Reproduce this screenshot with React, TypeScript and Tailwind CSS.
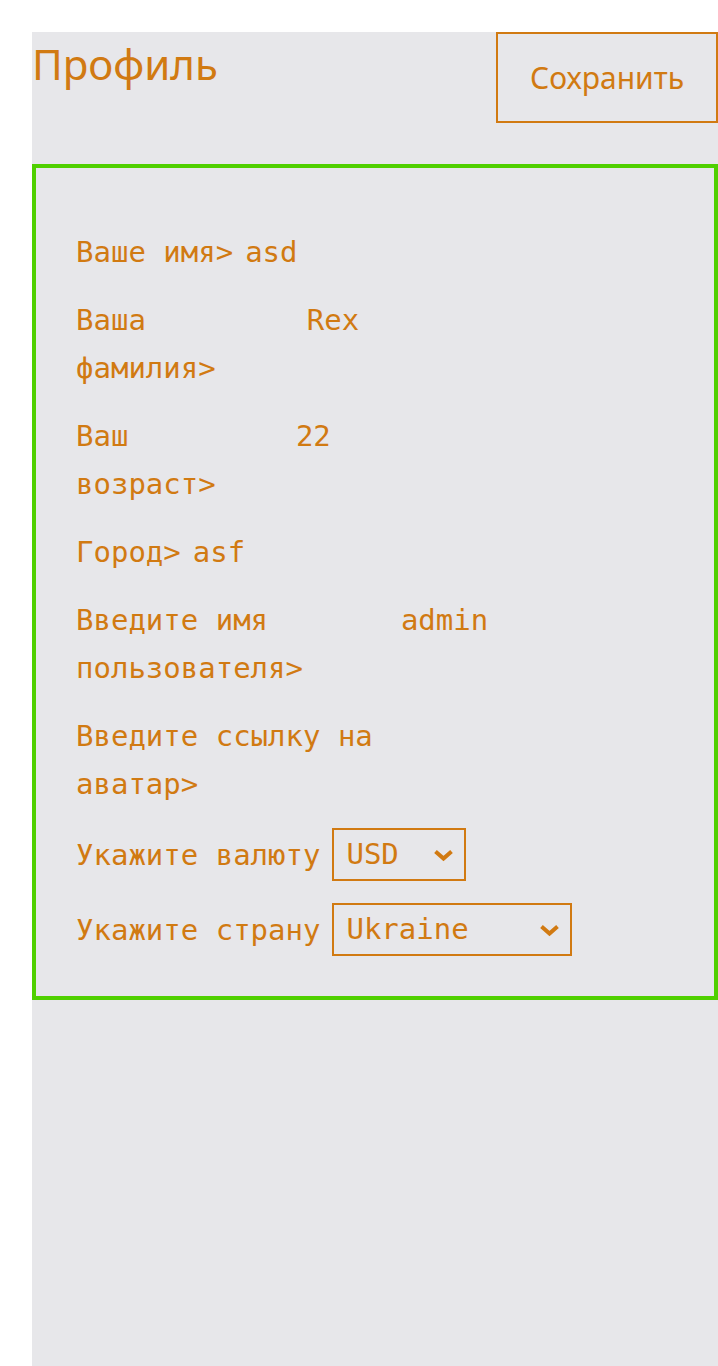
import { useState } from "react";

const mono = "font-['DejaVu_Sans_Mono',monospace]";

function Chevron() {
  return (
    <svg
      width="21"
      height="13"
      viewBox="0 0 21 13"
      className="pointer-events-none absolute right-[12px] top-1/2 -translate-y-1/2"
    >
      <polyline points="2.5,3 10.5,10 18.5,3" fill="none" stroke="#d17a12" strokeWidth="4" />
    </svg>
  );
}

function Field({ label, value }: { label: string; value: string }) {
  const [v, setV] = useState(value);
  return (
    <div className="flex items-start gap-3">
      <label className="leading-[48px]">{label}</label>
      <input
        value={v}
        onChange={(e) => setV(e.target.value)}
        className="h-[48px] w-[381px] min-w-0 border-0 bg-transparent p-0 leading-[48px] text-[#d17a12] outline-none"
      />
    </div>
  );
}

export default function App() {
  const [currency, setCurrency] = useState("USD");
  const [country, setCountry] = useState("Ukraine");

  return (
    <div className="flex min-h-screen flex-col bg-white pl-8 pt-8">
      <div className="flex-1 bg-[#e7e7ea] text-[#d17a12]">
        {/* Header */}
        <div className="flex items-start justify-between">
          <h1 className="mt-[3px] font-['Noto_Sans',sans-serif] text-[42px] leading-[57px]">Профиль</h1>
          <button className="h-[91px] w-[222px] border-2 border-[#d17a12] font-['Noto_Sans',sans-serif] text-[30px] leading-[40px]">
            Сохранить
          </button>
        </div>

        {/* Form */}
        <div
          className={`mt-[41px] flex flex-col gap-5 border-4 border-[#50d000] px-10 pb-10 pt-[60px] text-[29px] ${mono}`}
        >
          <Field label="Ваше имя>" value="asd" />
          <Field label="Ваша фамилия>" value="Rex" />
          <Field label="Ваш возраст>" value="22" />
          <Field label="Город>" value="asf" />
          <Field label="Введите имя пользователя>" value="admin" />
          <Field label="Введите ссылку на аватар>" value="" />

          <div className="flex items-center gap-3">
            <label className="leading-[48px]">Укажите валюту</label>
            <div className="relative">
              <select
                value={currency}
                onChange={(e) => setCurrency(e.target.value)}
                className="h-[53px] w-[134px] appearance-none border-2 border-[#d17a12] bg-transparent pl-3 text-[#d17a12] outline-none"
              >
                <option>USD</option>
                <option>EUR</option>
                <option>UAH</option>
              </select>
              <Chevron />
            </div>
          </div>

          <div className="mt-[2px] flex items-center gap-3">
            <label className="leading-[48px]">Укажите страну</label>
            <div className="relative">
              <select
                value={country}
                onChange={(e) => setCountry(e.target.value)}
                className="h-[53px] w-[240px] appearance-none border-2 border-[#d17a12] bg-transparent pl-3 text-[#d17a12] outline-none"
              >
                <option>Ukraine</option>
                <option>Poland</option>
                <option>Lithuania</option>
              </select>
              <Chevron />
            </div>
          </div>
        </div>
      </div>
    </div>
  );
}
